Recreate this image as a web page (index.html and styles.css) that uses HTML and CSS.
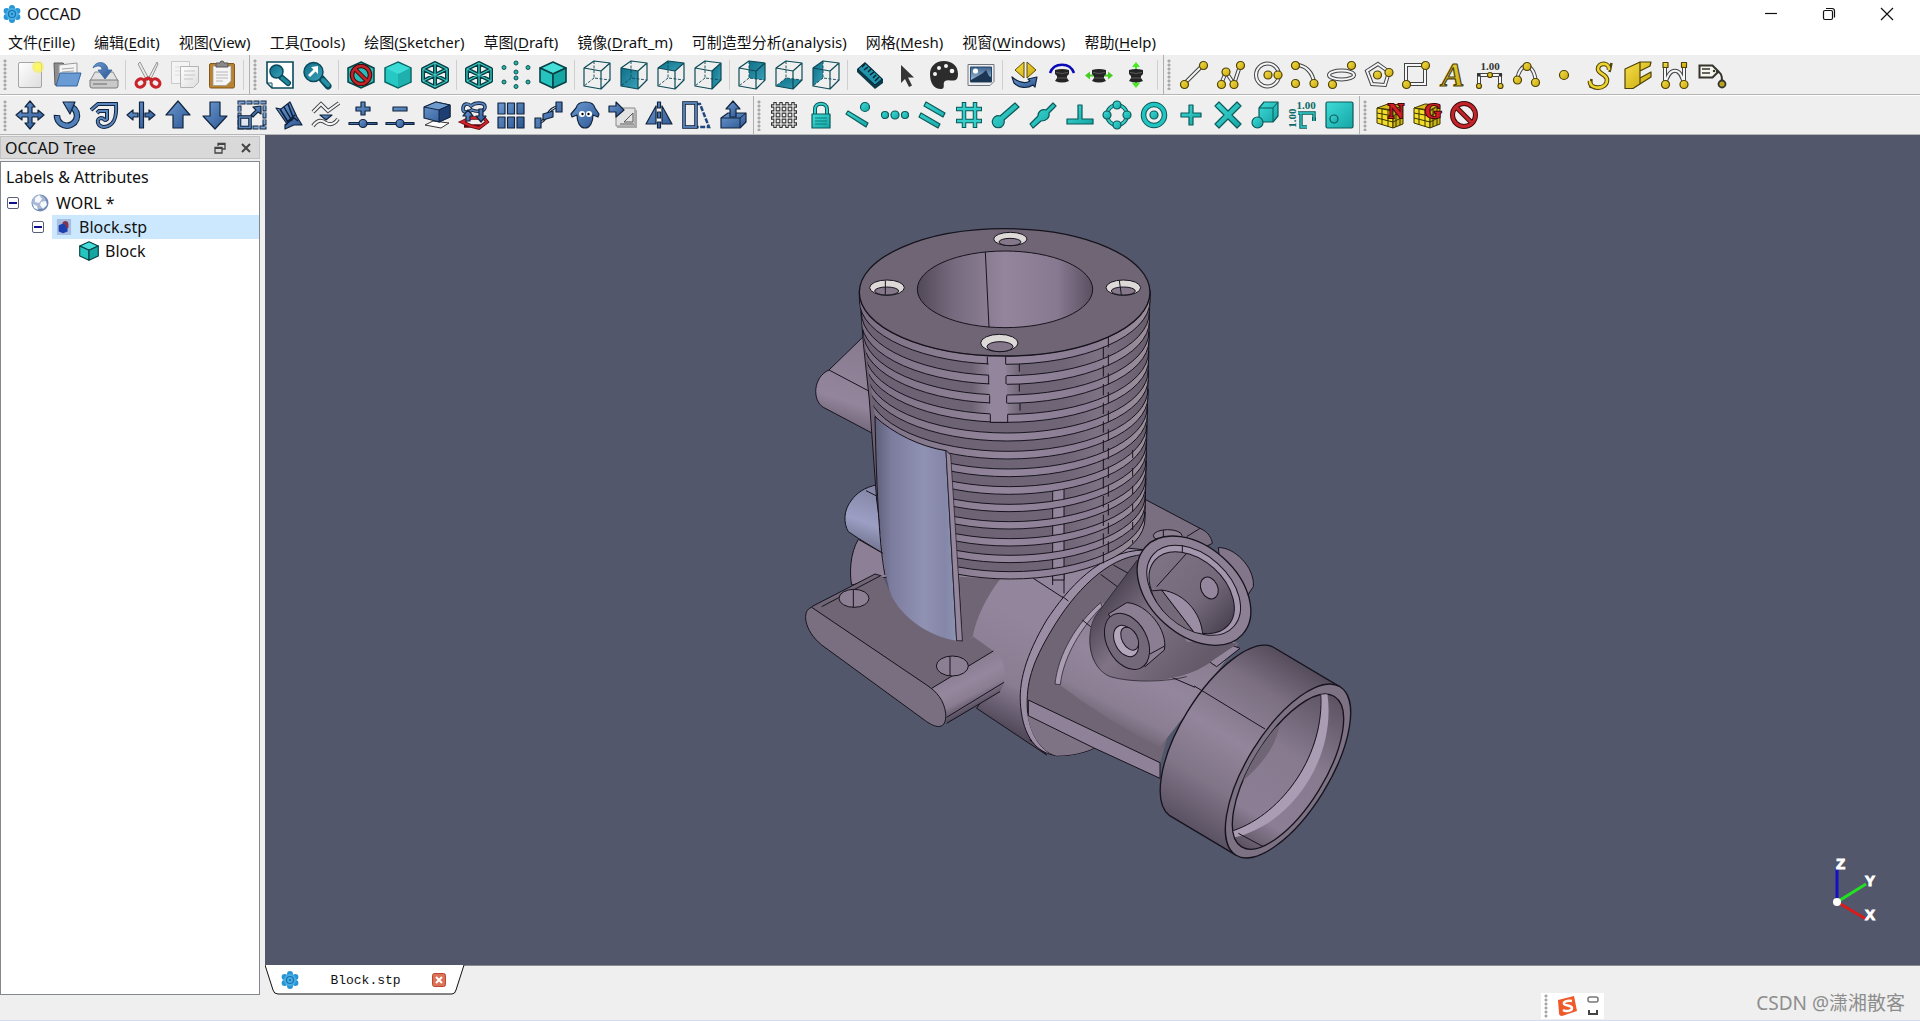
FILE: index.html
```html
<!DOCTYPE html>
<html lang="zh-CN">
<head>
<meta charset="utf-8">
<title>OCCAD</title>
<link rel="stylesheet" href="styles.css">
</head>
<body>
<svg class="defs" aria-hidden="true">
  <defs>
    <linearGradient id="blue" x1="0" y1="0" x2="1" y2="1"><stop offset="0" stop-color="#6c9ad2"/><stop offset="1" stop-color="#2d5692"/></linearGradient>
    <linearGradient id="teal" x1="0" y1="0" x2="1" y2="1"><stop offset="0" stop-color="#3fdcd8"/><stop offset="1" stop-color="#14a5a5"/></linearGradient>
    <linearGradient id="yellow" x1="0" y1="0" x2="1" y2="1"><stop offset="0" stop-color="#f6e04a"/><stop offset="1" stop-color="#c9a60c"/></linearGradient>
    <linearGradient id="face" x1="0" y1="0" x2="1" y2="1"><stop offset="0" stop-color="#0e6f88"/><stop offset="1" stop-color="#3aa0b8"/></linearGradient>
    <linearGradient id="paper" x1="0" y1="0" x2="1" y2="1"><stop offset="0" stop-color="#fff"/><stop offset="1" stop-color="#ddd"/></linearGradient>
    <linearGradient id="sky" x1="0" y1="0" x2="0" y2="1"><stop offset="0" stop-color="#3e648f"/><stop offset="1" stop-color="#a9c4dd"/></linearGradient>
    <g id="cubeWire" fill="none" stroke="#0c4a56" stroke-width="1.2" stroke-linejoin="round">
      <path d="M1 7l17 3v18l-17-3zM1 7L11 0l16 2-9 8M27 2v17l-9 9"/><path d="M11 0v17l16 2M11 17l-10 8" stroke-dasharray="3 1.5" stroke-width=".9"/>
    </g>
    <g id="hexWire" fill="none" stroke-linejoin="round">
      <path d="M14 2l12 6v12l-12 6-12-6V8zM2 8l12 6 12-6M14 14v12M14 2v12M2 20l12-6 12 6" stroke="#053c40" stroke-width="4"/>
      <path d="M14 2l12 6v12l-12 6-12-6V8zM2 8l12 6 12-6M14 14v12M14 2v12M2 20l12-6 12 6" stroke="#3cc9c4" stroke-width="1.300"/>
    </g>
    <g id="solidCube" stroke="#064246" stroke-width="1.6" stroke-linejoin="round">
      <path d="M14 1l13 6-13 6L1 7z" fill="#45ded8"/><path d="M1 7l13 6v14L1 21z" fill="#26c4be"/><path d="M27 7l-13 6v14l13-6z" fill="#17a5a3"/>
    </g>
    <g id="meshCube" stroke="#3b3300" stroke-width="1" stroke-linejoin="round">
      <path d="M1 7l11-4 15 1-10 5z" fill="#d8c11a"/><path d="M1 7l16 3v17L1 22z" fill="#f2dd2a"/><path d="M27 4l-10 6v17l10-4z" fill="#cbb416"/>
      <path d="M6 8v16M12 9v17M1 12l16 3 10-5M1 17l16 4 10-5M20 8v18M24 6v18" fill="none"/>
    </g>
    <g id="spool"><path d="M7 9q7-2 14 0v4l-2 2v2l2 3q-7 3-14 0l2-3v-2l-2-2z" fill="#242424"/><path d="M8 11.500q6 2 12 0M9 17h10" fill="none" stroke="#5a5a5a"/></g>
    <g id="gear">
      <g fill="#2795d6"><circle cx="9" cy="3" r="3"/><circle cx="9" cy="15" r="3"/><circle cx="3.600" cy="6" r="3"/><circle cx="14.400" cy="6" r="3"/><circle cx="3.600" cy="12" r="3"/><circle cx="14.400" cy="12" r="3"/></g>
      <circle cx="9" cy="9" r="6" fill="#49aee4"/><circle cx="9" cy="9" r="3.500" fill="none" stroke="#1474b4" stroke-width="1.2"/><circle cx="9" cy="9" r="1" fill="#0f67a4"/>
    </g>
  </defs>
</svg>

<header class="titlebar">
  <svg class="logo" viewBox="0 0 18 18"><use href="#gear"/></svg>
  <h1>OCCAD</h1>
  <div class="win-buttons">
    <button aria-label="Minimize"><svg viewBox="0 0 14 14"><path d="M1 6.500h12"/></svg></button>
    <button aria-label="Restore"><svg viewBox="0 0 14 14"><rect x="1.500" y="3.500" width="9" height="9" rx="1.500"/><path d="M4 1.500h6a2.500 2.500 0 0 1 2.500 2.500v6.500"/></svg></button>
    <button aria-label="Close"><svg viewBox="0 0 14 14"><path d="M1 1l12 12M13 1L1 13"/></svg></button>
  </div>
</header>

<nav class="menubar">
  <button>文件(<u>F</u>ille)</button><button>编辑(<u>E</u>dit)</button><button>视图(<u>V</u>iew)</button><button>工具(<u>T</u>ools)</button><button>绘图(<u>S</u>ketcher)</button><button>草图(<u>D</u>raft)</button><button>镜像(<u>D</u>raft_m)</button><button>可制造型分析(<u>a</u>nalysis)</button><button>网格(<u>M</u>esh)</button><button>视窗(<u>W</u>indows)</button><button>帮助(<u>H</u>elp)</button>
</nav>

<div class="toolrow">
  <div class="toolbar">
    <i class="handle"></i>
    <button aria-label="New"><svg viewBox="0 0 28 28"><rect x="2.500" y="1.500" width="23" height="25" rx="1.500" fill="url(#paper)" stroke="#a5a5a5"/><circle cx="22" cy="6" r="6" fill="#f6f05a" opacity=".7"/><circle cx="22" cy="6" r="3" fill="#fdf95c"/></svg></button>
    <button aria-label="Open"><svg viewBox="0 0 28 28"><path d="M1 2h9l2 2h11v20H2z" fill="#8d8d8d" stroke="#5d5d5d"/><path d="M6 4l18-2v14H6z" fill="#f4f4f4" stroke="#9a9a9a"/><path d="M9 8l12-1M9 11l12-1" stroke="#aaa"/><path d="M7 12h21l-4 13H3z" fill="#6b9bd4" stroke="#34639e"/></svg></button>
    <button aria-label="Save"><svg viewBox="0 0 28 28"><path d="M5 11h18l5 9H0z" fill="#e2e2e2" stroke="#8a8a8a"/><path d="M0 19h28v6q0 2-2 2H2q-2 0-2-2z" fill="#c9c9c9" stroke="#7b7b7b"/><path d="M3 23h14" stroke="#999" stroke-width="2"/><path d="M3 7C5 0 17-1 18 9h4l-7 9-7-9h4C12 4 7 4 3 7z" fill="url(#blue)" stroke="#3a679f" stroke-width=".8"/></svg></button>
    <i class="sep"></i>
    <button aria-label="Cut"><svg viewBox="0 0 28 28"><path d="M6 1l9 17-2 2L4 3zM23 1l-9 17 2 2 8-17z" fill="#e9e9e9" stroke="#8c8c8c" stroke-width=".9"/><g fill="none" stroke="#c9242b" stroke-width="3.200"><ellipse cx="6.500" cy="22" rx="4.500" ry="4" transform="rotate(-30 6.500 22)"/><ellipse cx="21.500" cy="22" rx="4.500" ry="4" transform="rotate(30 21.500 22)"/><path d="M10 19l4-2 4 2"/></g></svg></button>
    <button aria-label="Copy"><svg viewBox="0 0 28 28"><path d="M0.500 0.500h18v22h-18z" fill="#f4f4f4" stroke="#c9c9c9"/><path d="M4 6h10M4 10h5M4 14h5" stroke="#ddd"/><path d="M9.500 5.500h18v16l-5 5h-13z" fill="url(#paper)" stroke="#b4b4b4"/><path d="M13 10h11M13 14h11M13 18h9" stroke="#c4c4c4"/></svg></button>
    <button aria-label="Paste"><svg viewBox="0 0 28 28"><rect x="1.500" y="2.500" width="25" height="24.500" rx="1.500" fill="#b9822f" stroke="#83571a"/><path d="M5 5h18v15l-5 4.500H5z" fill="#f5f5f5" stroke="#999" stroke-width=".7"/><path d="M8 11h12M8 14h12M8 17h12M8 20h7" stroke="#b5b5b5"/><path d="M8 2h4q0-2 2-2t2 2h4v4H8z" fill="#8a8a86" stroke="#565656"/></svg></button>
    <i class="sep"></i>
  </div>
  <div class="toolbar">
    <i class="handle"></i>
    <button aria-label="Fit all"><svg viewBox="0 0 28 28"><path d="M1 1h26v26H6l-5-5z" fill="#fff" stroke="#0b4a5c" stroke-width="1.600"/><path d="M1 22h5v5" fill="none" stroke="#0b4a5c"/><path d="M15 16l7 6" stroke="#0b4a5c" stroke-width="6" stroke-linecap="round"/><path d="M16 17l6 5" stroke="#1e879c" stroke-width="3.500" stroke-linecap="round"/><circle cx="10.500" cy="10.500" r="6.500" fill="url(#face)" stroke="#0b4a5c" stroke-width="1.500"/></svg></button>
    <button aria-label="Fit selection"><svg viewBox="0 0 28 28"><path d="M19 18l6 7" stroke="#0b4a5c" stroke-width="7" stroke-linecap="round"/><path d="M20 19l5 5" stroke="#2390a4" stroke-width="4" stroke-linecap="round"/><circle cx="10.500" cy="11" r="9.500" fill="url(#face)" stroke="#0b4a5c" stroke-width="1.500"/><path d="M15 5v8l-2.500-2.500L7 16l-2-2 5.500-5.500L8 6z" fill="#fff"/></svg></button>
    <i class="sep"></i>
    <button aria-label="Draw style"><svg viewBox="0 0 28 28"><path d="M14 1l13 6v14l-13 6-13-6V7z" fill="#27bdb8" stroke="#064246" stroke-width="1.500"/><g fill="none"><circle cx="14" cy="14" r="9" stroke="#3d0a0a" stroke-width="4.500"/><path d="M8 8l12 12" stroke="#3d0a0a" stroke-width="4.500"/><circle cx="14" cy="14" r="9" stroke="#c2242a" stroke-width="2.500"/><path d="M8 8l12 12" stroke="#c2242a" stroke-width="2.500"/></g></svg></button>
    <button aria-label="Shaded"><svg viewBox="0 0 28 28"><path d="M14 1l13 6v14l-13 6-13-6V7z" fill="#27c8c4" stroke="#0a6764" stroke-width="1.500"/><path d="M14 13l12-6v14l-12 5z" fill="#1db0ad"/><path d="M14 2l12 5-12 6L2 7z" fill="#3bdcd6"/></svg></button>
    <button aria-label="Wireframe"><svg viewBox="0 0 28 28"><use href="#hexWire"/></svg></button>
    <i class="sep"></i>
    <button aria-label="Hidden line"><svg viewBox="0 0 28 28"><use href="#hexWire"/></svg></button>
    <button aria-label="Points"><svg viewBox="0 0 28 28"><g fill="#2bb0a8" stroke="#0a5552"><circle cx="14" cy="2" r="2"/><circle cx="14" cy="11" r="2"/><circle cx="14" cy="17" r="2"/><circle cx="14" cy="25.500" r="2"/><circle cx="2" cy="6.500" r="2"/><circle cx="26" cy="6.500" r="2"/><circle cx="2" cy="21" r="2"/><circle cx="26" cy="21" r="2"/></g></svg></button>
    <button aria-label="Flat lines"><svg viewBox="0 0 28 28"><use href="#solidCube"/></svg></button>
    <i class="sep"></i>
    <button aria-label="Axonometric"><svg viewBox="0 0 28 28"><use href="#cubeWire"/></svg></button>
    <button aria-label="Front"><svg viewBox="0 0 28 28"><path d="M1 7l17 3v18l-17-3z" fill="url(#face)"/><use href="#cubeWire"/></svg></button>
    <button aria-label="Top"><svg viewBox="0 0 28 28"><path d="M1 7L11 0l16 2-9 8z" fill="url(#face)"/><use href="#cubeWire"/></svg></button>
    <button aria-label="Right"><svg viewBox="0 0 28 28"><path d="M18 10l9-8v17l-9 9z" fill="url(#face)"/><use href="#cubeWire"/></svg></button>
    <i class="sep"></i>
    <button aria-label="Rear"><svg viewBox="0 0 28 28"><path d="M11 0l16 2v17l-16-2z" fill="url(#face)"/><use href="#cubeWire"/></svg></button>
    <button aria-label="Bottom"><svg viewBox="0 0 28 28"><path d="M1 25l10-8 16 2-9 9z" fill="url(#face)"/><use href="#cubeWire"/></svg></button>
    <button aria-label="Left"><svg viewBox="0 0 28 28"><path d="M1 7l10-7v17l-10 8z" fill="url(#face)"/><use href="#cubeWire"/></svg></button>
    <i class="sep"></i>
    <button aria-label="Measure"><svg viewBox="0 0 28 28"><path d="M1 8l8-7 18 17v4l-8 6L1 11z" fill="#0c3948"/><path d="M2 8l7-6 17 16-7 6z" fill="#2193ad" stroke="#062c38"/><path d="M9 3l-3 3M12 6l-4 3M15 8l-3 3M18 11l-4 3M20 14l-3 3M23 16l-4 4" stroke="#03232c" stroke-width="1.500"/></svg></button>
    <button aria-label="Select"><svg viewBox="0 0 28 28"><path d="M8 4v18l4-4 4 8 3-1.500-4-8h6z" fill="#353535"/></svg></button>
    <button aria-label="Appearance"><svg viewBox="0 0 28 28"><path d="M14 0C5 0 0 6 0 13c0 9 4 15 11 15 5 0 1-6 4-8 4-3 13 4 13-7C28 5 22 0 14 0z" fill="#2c2c2c"/><g fill="#f4f4f4"><circle cx="5" cy="13" r="2"/><circle cx="9" cy="7" r="2"/><circle cx="16" cy="5" r="2"/><circle cx="22" cy="10" r="2.300"/></g></svg></button>
    <button aria-label="Image"><svg viewBox="0 0 28 28"><path d="M1 3.500h26v17l-4 4H1z" fill="#eee" stroke="#6e7680"/><path d="M3.500 6h21v15h-21z" fill="url(#sky)" stroke="#264668"/><path d="M4 19l7-4 5-3 3-3 3 6 2 1v5H4z" fill="#1c3552"/><circle cx="8.500" cy="10" r="2.600" fill="#fff"/></svg></button>
    <i class="sep"></i>
    <button aria-label="Rotate view"><svg viewBox="0 0 28 28"><path d="M13 1v16L4 9zM16 1v16l9-8z" fill="url(#yellow)" stroke="#5f4d00"/><path d="M1 16l2 6c5 5 13 6 19 2l2 2 2-10-9 2 2 2c-5 3-12 1-18-4z" class="b"/></svg></button>
    <button aria-label="Tilt"><svg viewBox="0 0 28 28"><path d="M2 12C6 1 22 1 26 12" fill="none" stroke="#0909b8" stroke-width="2.500"/><use href="#spool"/></svg></button>
    <button aria-label="Pan horizontally"><svg viewBox="0 0 28 28"><path d="M0 14.500l5-4v3h4v2H5v3zM28 14.500l-5-4v3h-4v2h4v3z" fill="#46cc22"/><use href="#spool"/></svg></button>
    <button aria-label="Pan vertically"><svg viewBox="0 0 28 28"><path d="M14 1l4 5h-3v5h-2V6h-3zM14 27l4-5h-3v-5h-2v5h-3z" fill="#46ea22"/><use href="#spool"/></svg></button>
    <i class="sep"></i>
  </div>
  <div class="toolbar last">
    <i class="handle"></i>
    <button aria-label="Line"><svg viewBox="0 0 28 28"><path class="o" d="M4 23L23 4"/><path class="i" d="M4 23L23 4"/><g class="y"><circle cx="4.500" cy="23.500" r="4"/><circle cx="23.500" cy="4.500" r="4"/></g></svg></button>
    <button aria-label="Wire"><svg viewBox="0 0 28 28"><path class="o" d="M4 23l5-12 8 12 6-18"/><path class="i" d="M4 23l5-12 8 12 6-18"/><g class="y"><circle cx="4.500" cy="23.500" r="4"/><circle cx="9" cy="11" r="4"/><circle cx="17" cy="23.500" r="4"/><circle cx="23.500" cy="4.500" r="4"/></g></svg></button>
    <button aria-label="Circle"><svg viewBox="0 0 28 28"><circle class="o" cx="13.500" cy="14" r="11.500"/><circle class="i" cx="13.500" cy="14" r="11.500"/><g class="y"><circle cx="14" cy="14" r="4"/><circle cx="24" cy="14" r="4"/></g></svg></button>
    <button aria-label="Arc"><svg viewBox="0 0 28 28"><path class="o" d="M5 4c10 0 17 8 18 18"/><path class="i" d="M5 4c10 0 17 8 18 18"/><g class="y"><circle cx="4.500" cy="4.500" r="4"/><circle cx="4.500" cy="22.500" r="4"/><circle cx="23" cy="22.500" r="4"/></g></svg></button>
    <button aria-label="Ellipse"><svg viewBox="0 0 28 28"><ellipse class="o" cx="13.500" cy="14" rx="12.500" ry="4.500"/><ellipse class="i" cx="13.500" cy="14" rx="12.500" ry="4.500"/><g class="y"><circle cx="4.500" cy="23.500" r="4"/><circle cx="23.500" cy="4.500" r="4"/></g></svg></button>
    <button aria-label="Polygon"><svg viewBox="0 0 28 28"><path class="o" d="M13 3l11 8-4 13-13-1L2 10z"/><path class="i" d="M13 3l11 8-4 13-13-1L2 10z"/><g class="y"><circle cx="12.500" cy="14" r="4"/><circle cx="24" cy="11.500" r="4"/></g></svg></button>
    <button aria-label="Rectangle"><svg viewBox="0 0 28 28"><path class="o" d="M4 4h19v19H4z"/><path class="i" d="M4 4h19v19H4z"/><g class="y"><circle cx="4.500" cy="23.500" r="4"/><circle cx="23.500" cy="4.500" r="4"/></g></svg></button>
    <button aria-label="Text"><svg viewBox="0 0 28 28"><text class="glyph y" x="14" y="25" font-size="34">A</text></svg></button>
    <button aria-label="Dimension"><svg viewBox="0 0 28 28"><path class="o" d="M3 25V14h21v11"/><path class="i" d="M3 25V14h21v11"/><text class="dim" x="14" y="9">1.00</text><g class="y"><circle cx="3" cy="25" r="2.500"/><circle cx="24.500" cy="25" r="2.500"/><circle cx="14" cy="14" r="2.500"/></g><circle cx="3" cy="14" r="1.800" fill="#333"/><circle cx="24.500" cy="14" r="1.800" fill="#333"/></svg></button>
    <button aria-label="B-spline"><svg viewBox="0 0 28 28"><path class="o" d="M4 19C7 0 21 0 23 22"/><path class="i" d="M4 19C7 0 21 0 23 22"/><g class="y"><circle cx="4.500" cy="19" r="4"/><circle cx="14" cy="5.500" r="4"/><circle cx="22.500" cy="21.500" r="4"/></g></svg></button>
    <button aria-label="Point"><svg viewBox="0 0 28 28"><circle class="y" cx="14" cy="14" r="4.500"/></svg></button>
    <button aria-label="Shape string"><svg viewBox="0 0 28 28"><path d="M3 20c-1 9 17 9 17-1 0-6-9-6-9-11 0-7 12-7 11 1" fill="none" stroke="#4e4208" stroke-width="4.600"/><path d="M3.500 27l1-9M22.500 11l2-9" stroke="#4e4208" stroke-width="2.500"/><path d="M3 20c-1 9 17 9 17-1 0-6-9-6-9-11 0-7 12-7 11 1" fill="none" stroke="#ecd32f" stroke-width="2.600"/></svg></button>
    <button aria-label="Facebinder"><svg viewBox="0 0 28 28"><g class="y"><path d="M1 8L16 1v22L9 27.500H1zM16 1h11l-1 4-10 5zM16 17l11-6v5l-11 7z"/></g></svg></button>
    <button aria-label="Bezier"><svg viewBox="0 0 28 28"><path class="o" d="M4 4v20C8 5 20 5 23 24V4"/><path class="i" d="M4 4v20C8 5 20 5 23 24V4"/><g class="y"><circle cx="4.500" cy="23.500" r="4"/><circle cx="23" cy="23.500" r="4"/><path d="M2 1.500h5v5H2zM20.500 1.500h5v5h-5z"/></g></svg></button>
    <button aria-label="Label"><svg viewBox="0 0 28 28"><path d="M1.500 4.500h13l6 6-6 6h-13zM18 10c5 1 6 4 6 10" fill="#f6f6ee" stroke="#34342c" stroke-width="2"/><path d="M4 8h8M4 12h8" stroke="#34342c" stroke-width="1.500"/><circle cx="24" cy="23" r="3.500" fill="#b7a521" stroke="#34342c" stroke-width="1.800"/><circle cx="16" cy="10" r="1.200" fill="#34342c"/></svg></button>
  </div>
</div>

<div class="toolrow">
  <div class="toolbar">
    <i class="handle"></i>
    <button aria-label="Move"><svg viewBox="0 0 28 28"><path class="b" d="M14 0l5 6h-3v6h6V9l6 5-6 5v-3h-6v6h3l-5 6-5-6h3v-6H6v3l-6-5 6-5v3h6V6H9z"/></svg></button>
    <button aria-label="Rotate"><svg viewBox="0 0 28 28"><path d="M4 14a10 10 0 1 0 15-8" fill="none" stroke="#12253f" stroke-width="6.500"/><path d="M4 15a10 10 0 1 0 15-9" fill="none" stroke="#5280ba" stroke-width="4.300"/><path class="b" d="M10 1h12l-5 12z"/></svg></button>
    <button aria-label="Offset"><svg viewBox="0 0 28 28"><g fill="none"><path d="M1 9l7-6h18c1 14-2 22-12 23-6 0-9-8-3-9 4 0 3 4 6 1V10h-8l-2 2" stroke="#12253f" stroke-width="4"/><path d="M1 9l7-6h18c1 14-2 22-12 23-6 0-9-8-3-9 4 0 3 4 6 1V10h-8l-2 2" stroke="#5b86bd" stroke-width="2"/></g></svg></button>
    <button aria-label="Trim"><svg viewBox="0 0 28 28"><path class="b" d="M12.500 1h4v26h-4zM0 14l6-5v3h5v4H6v3zM28 14l-6-5v3h-4v4h4v3z"/></svg></button>
    <button aria-label="Upgrade"><svg viewBox="0 0 28 28"><path class="b" d="M14 0l12 14h-7v13H9V14H2z"/></svg></button>
    <button aria-label="Downgrade"><svg viewBox="0 0 28 28"><path class="b" d="M14 28L2 15h7V1h10v14h7z"/></svg></button>
    <button aria-label="Scale"><svg viewBox="0 0 28 28"><rect x="1.500" y="1.500" width="25" height="25" fill="none" stroke="#12253f" stroke-width="4" stroke-dasharray="6 1"/><rect x="1.500" y="1.500" width="25" height="25" fill="none" stroke="#7ba3d6" stroke-width="2" stroke-dasharray="5 2"/><rect x="1.500" y="16" width="10.500" height="10.500" fill="#dfe6ef" stroke="#12253f" stroke-width="3.600"/><rect x="1.500" y="16" width="10.500" height="10.500" fill="none" stroke="#5b86bd" stroke-width="1.500"/><path class="b" d="M23 5v8l-3-2-5 5-2-2 5-5-3-3z"/></svg></button>
    <button aria-label="Edit"><svg viewBox="0 0 28 28"><path class="b" d="M1 7l5 1L15 1l7 15 5 8-8 0-9 4 0-4 2-1z" stroke-width="2"/><path d="M5 8l8 13M9 6l8 14M13 3l5 13M10 24l9-7 4 3M12 21l8-7" stroke="#0c1f3a" stroke-width="1.500" fill="none"/></svg></button>
    <button aria-label="Wire to B-spline"><svg viewBox="0 0 28 28"><path class="o" d="M1 11l8-8 7 7 11-8M1 25c5-7 9-6 13-3 4 2 8 2 12-4"/><path class="i" d="M1 11l8-8 7 7 11-8M1 25c5-7 9-6 13-3 4 2 8 2 12-4"/><path class="b" d="M8 14h12l-6 5z"/></svg></button>
    <button aria-label="Add point"><svg viewBox="0 0 28 28"><path class="b" d="M12 1h4v5h5v4h-5v4h-4v-4H7V6h5zM0 21.500h28v2H0z"/><circle class="b" cx="14" cy="22.500" r="4"/></svg></button>
    <button aria-label="Remove point"><svg viewBox="0 0 28 28"><path class="b" d="M7 6h14v4H7zM0 21.500h28v2H0z"/><circle class="b" cx="14" cy="22.500" r="4"/></svg></button>
    <button aria-label="2D view"><svg viewBox="0 0 28 28"><path d="M2 24l8-4 16 2-8 5z" fill="#fff" stroke="#333"/><path class="b" d="M1 6l12-5 14 3v12l-11 5-15-4z"/><path d="M1 6l15 3 11-5-14-3z" fill="#6f9ace" stroke="#12253f"/><path d="M16 9l11-5v12l-11 5z" fill="#1d3f74" stroke="#12253f"/></svg></button>
    <button aria-label="Draft to sketch"><svg viewBox="0 0 28 28"><g fill="none"><path d="M2 21l8-4h14l3 4-8 6-8-2zM4 25h18" stroke="#5c0a0e" stroke-width="3.600"/><path d="M2 21l8-4h14l3 4-8 6-8-2z" stroke="#d3222a" stroke-width="2"/><path d="M3 8c0-6 5-6 8-3 4-4 14-4 14 1s-9 5-13 3c-4 3-9 3-9-1z" stroke="#12253f" stroke-width="3.600"/><path d="M3 8c0-6 5-6 8-3 4-4 14-4 14 1s-9 5-13 3c-4 3-9 3-9-1z" stroke="#5b86bd" stroke-width="1.800"/></g><path class="b" d="M6 20v-5H3l5-6 5 6h-3v5zM19 8h4v7h3l-5 6-5-6h3z"/></svg></button>
    <button aria-label="Array"><svg viewBox="0 0 28 28"><path class="b" d="M1 2h7v11H1zM10.500 2h7v11h-7zM20 2h7v11h-7zM1 16h7v11H1zM10.500 16h7v11h-7zM20 16h7v11h-7z"/></svg></button>
    <button aria-label="Path array"><svg viewBox="0 0 28 28"><path d="M3 22C14 22 12 6 25 6" fill="none" stroke="#12253f" stroke-width="3"/><path d="M3 22C14 22 12 6 25 6" fill="none" stroke="#eee"/><path class="b" d="M1 17h6v10H1zM9 13l10-3v6l-10 3zM22 1h6v10h-6z"/></svg></button>
    <button aria-label="Clone"><svg viewBox="0 0 28 28"><path class="b" d="M5 7c2-8 17-8 19 0l4 6-1 3-5-2c0 7-3 13-8 13S6 21 6 14l-5 2-1-3z"/><circle cx="11" cy="13" r="3" fill="#fff"/><circle cx="18" cy="13" r="3" fill="#fff"/><circle cx="11.500" cy="13" r="1.200"/><circle cx="17.500" cy="13" r="1.200"/></svg></button>
    <button aria-label="Drawing"><svg viewBox="0 0 28 28"><path d="M8 7h19v18H8z" fill="#e3e3e3" stroke="#888"/><path d="M9 26h19V9" fill="none" stroke="#aaa" stroke-width="2"/><path d="M16 21l9-9v9zM12 23h14" fill="none" stroke="#555"/><path class="b" d="M1 5h7V1l8 8-8 7v-5H1z"/></svg></button>
    <button aria-label="Mirror"><svg viewBox="0 0 28 28"><path class="b" d="M11 5v18H1zM17 5v18h10zM12.500 1h3v6h-3zM12.500 11h3v6h-3zM12.500 21h3v6h-3z"/></svg></button>
    <button aria-label="Stretch"><svg viewBox="0 0 28 28"><path d="M14 3h4l9 23H14" fill="none" stroke="#20477e" stroke-width="2.500" stroke-dasharray="5 1.500"/><rect x="2" y="2" width="12" height="24" fill="#eee" stroke="#12253f" stroke-width="3.600"/><rect x="2" y="2" width="12" height="24" fill="none" stroke="#5b86bd" stroke-width="1.800"/></svg></button>
    <button aria-label="Extrude"><svg viewBox="0 0 28 28"><path class="b" d="M2 17l7-5h18v9l-6 6H2z"/><path d="M2 17h19v10M21 17l6-5" fill="none" stroke="#12253f"/><path class="b" d="M14 0l7 8h-4v8h-6V8H7z"/></svg></button>
  </div>
  <div class="toolbar">
    <i class="handle"></i>
    <button aria-label="Grid"><svg viewBox="0 0 28 28"><path d="M5 1v26M11 1v26M17 1v26M23 1v26M1 5h26M1 11h26M1 17h26M1 23h26" stroke="#333" stroke-width="3.400"/><path d="M5 2v24M11 2v24M17 2v24M23 2v24M2 5h24M2 11h24M2 17h24M2 23h24" stroke="#fff" stroke-width="1.200"/></svg></button>
    <button aria-label="Snap lock"><svg viewBox="0 0 28 28"><path d="M8 14V8c0-7 12-7 12 0v6" fill="none" stroke="#0b5a58" stroke-width="4"/><path d="M8 14V8c0-7 12-7 12 0v6" fill="none" stroke="#35cfcb" stroke-width="2"/><path class="t" d="M5 13h18v14H5z"/><path d="M8 17h12M8 20h12M8 23h12" stroke="#0b7a78"/></svg></button>
    <button aria-label="Snap end"><svg viewBox="0 0 28 28"><circle class="t" cx="21" cy="6" r="4.500"/><path class="t" d="M4 10l20 12-2 4L2 13z"/></svg></button>
    <button aria-label="Snap extension"><svg viewBox="0 0 28 28"><g class="t"><circle cx="4" cy="14" r="3.500"/><circle cx="14" cy="14" r="4"/><circle cx="24" cy="14" r="3.500"/></g></svg></button>
    <button aria-label="Snap parallel"><svg viewBox="0 0 28 28"><path class="t" d="M8 1l19 11-2 4L6 5zM3 12l19 11-2 4L1 16z"/></svg></button>
    <button aria-label="Snap grid"><svg viewBox="0 0 28 28"><path d="M9 1v26M20 1v26M1 8h26M1 20h26" stroke="#0b5a58" stroke-width="4.500"/><path d="M9 2v24M20 2v24M2 8h24M2 20h24" stroke="#35cfcb" stroke-width="2.500"/></svg></button>
    <button aria-label="Snap endpoint"><svg viewBox="0 0 28 28"><path class="t" d="M23 2l4 4-15 13a6 6 0 1 1-4-4z"/></svg></button>
    <button aria-label="Snap midpoint"><svg viewBox="0 0 28 28"><path class="t" d="M1 23l8-8a6 6 0 0 1 8-6l7-7 3 3-7 7c1 5-3 8-8 8l-8 7z"/></svg></button>
    <button aria-label="Snap perpendicular"><svg viewBox="0 0 28 28"><path class="t" d="M12 4h4v14h11v5H1v-5h11z"/></svg></button>
    <button aria-label="Snap angle"><svg viewBox="0 0 28 28"><circle cx="14" cy="14" r="10" fill="none" stroke="#0b5a58" stroke-width="4"/><circle cx="14" cy="14" r="10" fill="none" stroke="#35cfcb" stroke-width="2"/><g class="t"><circle cx="14" cy="4" r="4"/><circle cx="14" cy="24" r="4"/><circle cx="4" cy="14" r="4"/><circle cx="24" cy="14" r="4"/></g></svg></button>
    <button aria-label="Snap center"><svg viewBox="0 0 28 28"><circle cx="14" cy="14" r="10.500" fill="none" stroke="#0b5a58" stroke-width="5.500"/><circle cx="14" cy="14" r="10.500" fill="none" stroke="#22c4c2" stroke-width="3.500"/><circle class="t" cx="14" cy="14" r="4"/></svg></button>
    <button aria-label="Snap ortho"><svg viewBox="0 0 28 28"><path class="t" d="M12 4h4v8h8v4h-8v8h-4v-8H4v-4h8z"/></svg></button>
    <button aria-label="Snap intersection"><svg viewBox="0 0 28 28"><path class="t" d="M5 1l9 9 9-9 4 4-9 9 9 9-4 4-9-9-9 9-4-4 9-9-9-9z"/></svg></button>
    <button aria-label="Snap special"><svg viewBox="0 0 28 28"><path class="t" d="M8 7l5-6h14v14l-5 6H8z"/><path d="M8 7h14v14M22 7l5-6" fill="none" stroke="#0b5a58"/><circle class="t" cx="6.500" cy="21.500" r="5.500"/></svg></button>
    <button aria-label="Snap dimensions"><svg viewBox="0 0 28 28"><text class="dim t" x="18" y="8">1.00</text><text class="dim t" transform="rotate(-90 8 17)" x="8" y="17">1.00</text><path d="M10 12h16v8M13 12v14h6M24 18h4" fill="none" stroke="#0b5a58" stroke-width="3.400"/><path d="M10 12h16v8M13 12v14h6" fill="none" stroke="#35cfcb" stroke-width="1.300"/></svg></button>
    <button aria-label="Snap working plane"><svg viewBox="0 0 28 28"><rect class="t" x="1" y="1" width="27" height="26" rx="1.500"/><circle class="t" cx="9" cy="18" r="4"/></svg></button>
  </div>
  <div class="toolbar last">
    <i class="handle"></i>
    <button aria-label="Netgen mesh"><svg viewBox="0 0 28 28"><use href="#meshCube"/><text class="mesh" x="20" y="17">N</text></svg></button>
    <button aria-label="Gmsh mesh"><svg viewBox="0 0 28 28"><use href="#meshCube"/><text class="mesh" x="20" y="17">G</text></svg></button>
    <button aria-label="Clear mesh"><svg viewBox="0 0 28 28"><g fill="none"><circle cx="14" cy="14" r="11.500" stroke="#3d0a0a" stroke-width="5"/><path d="M6 6l16 16" stroke="#3d0a0a" stroke-width="5"/><circle cx="14" cy="14" r="11.500" stroke="#c2242a" stroke-width="3"/><path d="M6 6l16 16" stroke="#c2242a" stroke-width="3"/></g></svg></button>
  </div>
</div>

<main class="workspace">
  <aside class="dock">
    <div class="dock-title"><h2>OCCAD Tree</h2>
      <button aria-label="Float"><svg viewBox="0 0 12 12"><path d="M4 4V1.500h7V7H8M1 5.500h7V11H1z" fill="none" stroke="#444" stroke-width="1.300"/><path d="M4 2h7M1 6h7" stroke="#444" stroke-width="2"/></svg></button>
      <button aria-label="Close panel"><svg viewBox="0 0 12 12"><path d="M2 2l8 8M10 2l-8 8" stroke="#444" stroke-width="2"/></svg></button>
    </div>
    <div class="tree">
      <div class="tree-head">Labels &amp; Attributes</div>
      <ul>
        <li class="l1"><button class="expander" aria-label="Collapse WORL"></button><svg viewBox="0 0 18 18"><circle cx="9" cy="9" r="8.500" fill="#7189b4"/><circle cx="8" cy="8" r="7" fill="#a9b9d6"/><path d="M4 4l4-3 3 4-3 4-4-1zM10 8l5-1 1 4-4 4-3-4zM2 10l4 2 1 4-4-2z" fill="#f7f9fd"/></svg><span>WORL *</span></li>
        <li class="l2"><button class="expander" aria-label="Collapse Block.stp"></button><div class="selected"><svg viewBox="0 0 18 18"><path d="M1 0h16v18H1z" fill="#a9bde0"/><path d="M3 7l5-2 5 2v7l-5 2-5-2z" fill="#1b3fae"/><path d="M7 5c1-4 7-4 7 1v4h-3V7z" fill="#7e3552"/></svg><span>Block.stp</span></div></li>
        <li class="l3"><svg viewBox="0 0 28 28"><use href="#solidCube"/></svg><span>Block</span></li>
      </ul>
    </div>
  </aside>

  <section class="document">
    <div class="viewport">
      <svg class="model" viewBox="-1545 -195 4965 2490" role="img" aria-label="Engine block">
        <defs>
          <linearGradient id="bore"><stop offset="0" stop-color="#514858"/><stop offset=".2" stop-color="#756a7d"/><stop offset=".5" stop-color="#94859c"/><stop offset=".8" stop-color="#877990"/><stop offset="1" stop-color="#5a5061"/></linearGradient>
          <linearGradient id="fin" gradientUnits="userSpaceOnUse" x1="240" y1="0" x2="1110" y2="0"><stop offset="0" stop-color="#7b7083"/><stop offset=".5" stop-color="#93859b"/><stop offset=".8" stop-color="#897b91"/><stop offset="1" stop-color="#9b909a"/></linearGradient>
          <linearGradient id="gap" gradientUnits="userSpaceOnUse" x1="240" y1="0" x2="1110" y2="0"><stop offset="0" stop-color="#6b6172"/><stop offset=".7" stop-color="#6f6576"/><stop offset=".82" stop-color="#7d7184"/><stop offset="1" stop-color="#675d6c"/></linearGradient>
          <linearGradient id="slot"><stop offset="0" stop-color="#6f6575"/><stop offset=".4" stop-color="#93859b"/><stop offset=".65" stop-color="#93859b"/><stop offset="1" stop-color="#6f6575"/></linearGradient>
          <linearGradient id="panel"><stop offset="0" stop-color="#5e5f78"/><stop offset=".2" stop-color="#7c7c9e"/><stop offset=".6" stop-color="#9092b4"/><stop offset=".85" stop-color="#8586a8"/><stop offset="1" stop-color="#8c93b0"/></linearGradient>
          <linearGradient id="lug" x1=".3" y1="0" x2=".1" y2="1"><stop offset="0" stop-color="#887b90"/><stop offset=".6" stop-color="#93859b"/><stop offset="1" stop-color="#5c5263"/></linearGradient>
          <linearGradient id="lugFront" gradientUnits="userSpaceOnUse" x1="540" y1="650" x2="600" y2="768"><stop offset="0" stop-color="#8a7d92"/><stop offset=".4" stop-color="#95879d"/><stop offset=".7" stop-color="#8a7c91"/><stop offset="1" stop-color="#51495a"/></linearGradient>
          <linearGradient id="bluelug" x1=".4" y1="0" x2=".2" y2="1"><stop offset="0" stop-color="#8486a6"/><stop offset=".5" stop-color="#9c9fc4"/><stop offset="1" stop-color="#626279"/></linearGradient>
          <linearGradient id="case" gradientUnits="userSpaceOnUse" x1="800" y1="540" x2="665" y2="830"><stop offset="0" stop-color="#93859b"/><stop offset=".6" stop-color="#8a7d92"/><stop offset="1" stop-color="#51495a"/></linearGradient>
          <linearGradient id="shaft" gradientUnits="userSpaceOnUse" x1="460" y1="420" x2="310" y2="715"><stop offset="0" stop-color="#887b8f"/><stop offset=".5" stop-color="#94869c"/><stop offset=".85" stop-color="#8b7e93"/><stop offset="1" stop-color="#746979"/></linearGradient>
          <linearGradient id="carb" gradientUnits="userSpaceOnUse" x1="290" y1="370" x2="560" y2="600"><stop offset="0" stop-color="#4a4251"/><stop offset=".4" stop-color="#807386"/><stop offset="1" stop-color="#645a69"/></linearGradient>
          <linearGradient id="mouth"><stop offset="0" stop-color="#7e7285"/><stop offset=".6" stop-color="#74697b"/><stop offset="1" stop-color="#4c4453"/></linearGradient>
          <linearGradient id="collar" gradientUnits="userSpaceOnUse" x1="910" y1="560" x2="600" y2="1070"><stop offset="0" stop-color="#564d5d"/><stop offset=".2" stop-color="#7b6f81"/><stop offset=".5" stop-color="#93859b"/><stop offset=".75" stop-color="#807487"/><stop offset="1" stop-color="#585061"/></linearGradient>
          <linearGradient id="collarIn" gradientUnits="userSpaceOnUse" x1="1000" y1="650" x2="720" y2="1100"><stop offset="0" stop-color="#5d5363"/><stop offset=".4" stop-color="#877a8f"/><stop offset=".8" stop-color="#8c7e94"/><stop offset="1" stop-color="#5a505f"/></linearGradient>
          <clipPath id="finWindow"><path d="M230 260H1120V1160H532L505 752 380 722 285 652z"/></clipPath>
          <clipPath id="collarHole"><ellipse cx="864" cy="875" rx="265" ry="108" transform="rotate(-58.300 864 875)"/></clipPath>
          <clipPath id="carbHole"><ellipse cx="577" cy="338" rx="148" ry="100" transform="rotate(42 577 338)"/></clipPath>
        </defs>

        <g class="edge">
          <path d="M250 410L147 510C100 530 95 600 130 622L287 705V400z" fill="url(#lug)"/>
          <path d="M147 510L270 575" fill="none"/>
          <g transform="translate(0 750)">
            <path d="M295 103C250 113 230 130 215 150 190 180 190 220 205 245L235 265 312 312z" fill="url(#bluelug)"/>
            <path d="M258 122L298 142" fill="none"/>
            <path d="M235 268C210 310 208 370 215 405L325 380 312 312z" fill="#8d7f95"/>
          </g>
          <g transform="translate(660 840)">
            <path d="M400 40L435 58 600 145C625 155 635 175 637 190L500 260 380 220z" fill="#7a6f80"/>
            <ellipse cx="503" cy="167" rx="43" ry="18" fill="#8c7f92"/><path d="M490 150V185M600 145L560 170" fill="none"/>
            <path d="M655 203C700 200 765 260 760 320L740 350 660 250z" fill="#83768a"/>
          </g>

          <g transform="translate(0 750)">
            <path d="M535 370C700 395 900 360 1000 290L1100 300 860 450 750 870 800 915 590 775 640 700 548 575z" fill="url(#case)"/>
            <path d="M538 380L660 388C620 440 590 500 578 560L548 575z" fill="#6f6575" stroke="none"/>
            <path d="M818 300V405M852 300V430M760 385L860 450" fill="none"/>
            <path d="M1095 300C960 300 860 420 800 510 735 620 715 700 722 770 730 860 770 910 830 917 880 917 920 905 940 895L1200 760V340z" fill="#9b8da3"/>
            <path d="M1090 314C980 320 880 430 815 540 755 640 738 700 742 780 750 860 790 910 830 917 880 917 920 905 940 895L1200 760V340z" fill="#6f6575"/>
            <path d="M742 790C750 860 790 910 830 917 880 917 920 905 940 895z" fill="#7e7384" stroke="none"/>
            <path d="M848 440L865 453M962 373L1012 410" fill="none"/>
            <path d="M1000 345L1045 370" fill="none"/>
          </g>
          <g transform="translate(660 840)">
            <path d="M90 664L180 590 540 640 480 850z" fill="#6f6575" stroke="none"/>
            <path d="M85 660L480 848V895L280 803 85 707z" fill="#8f8198"/>
            <path d="M165 612C175 520 230 430 302 368L420 400 715 490 560 700 480 800Q330 730 180 615z" fill="url(#shaft)" stroke="none"/>
            <path d="M165 612C175 520 230 430 302 368L306 380C245 440 190 530 181 614z" fill="#aa9cb2" stroke-width="2"/>
            <path d="M247 420L272 440M515 592L585 622" fill="none"/>
            <path d="M620 540L685 492 720 505 650 560z" fill="#94869c"/>
            <path d="M412 240L285 410C255 480 265 560 330 590 420 615 560 605 640 540L715 490 560 485z" fill="url(#carb)" stroke="none"/>
            <path d="M412 240L285 410C258 460 262 560 330 590 400 610 500 605 560 590" fill="none" stroke-width="2"/>
            <path d="M325 402L380 368C440 370 505 450 493 510L435 560z" fill="#8b7e93"/>
            <path d="M450 522L494 498" fill="none"/>
            <ellipse cx="381" cy="484" rx="60" ry="90" transform="rotate(-28 381 484)" fill="#73687a"/>
            <ellipse cx="378" cy="483" rx="33" ry="50" transform="rotate(-28 378 483)" fill="#b3a6bb"/>
            <ellipse cx="389" cy="476" rx="23" ry="37" transform="rotate(-28 389 476)" fill="#82758a"/>
            <ellipse cx="582" cy="332" rx="196" ry="132" transform="rotate(42 582 332)" fill="#8d8094" stroke-width="4"/>
            <ellipse cx="581" cy="331" rx="162" ry="108" transform="rotate(42 581 331)" fill="#a496ac"/>
            <ellipse cx="575" cy="338" rx="147" ry="99" transform="rotate(42 575 338)" fill="url(#mouth)"/>
            <g clip-path="url(#carbHole)">
              <path d="M440 334L485 330 600 480 470 440z" fill="#746979"/>
              <path d="M485 330C560 340 612 410 608 480H600z" fill="#9b8da3"/>
              <path d="M470 320L560 220" fill="none"/>
            </g>
            <ellipse cx="628" cy="324" rx="25" ry="34" transform="rotate(-25 628 324)" fill="#94869c"/>
            <path d="M547 195V216" fill="none"/>
            <path d="M819 501A297 123 -58.300 0 0 509 1007L709 1126 1019 620z" fill="url(#collar)" stroke-width="4"/>
            <path d="M583 618L795 747" fill="none"/>
            <ellipse cx="864" cy="873" rx="297" ry="123" transform="rotate(-58.300 864 873)" fill="#7d7283" stroke-width="4"/>
            <path d="M1003.300 649.500A265 108 -58.300 0 0 724.700 1100.500 265 108 -58.300 0 0 1003.300 649.500z" fill="url(#collarIn)" stroke-width="4"/>
            <g clip-path="url(#collarHole)">
              <path d="M720 910C780 860 830 800 838 735L700 820z" fill="#6f6575" stroke="none"/>
              <path d="M960 640C980 820 850 1000 700 1052L705 1072C880 1030 1010 830 982 640z" fill="#aa9cb2" stroke="none"/>
              <path d="M962 640C975 820 850 1000 700 1052" fill="none"/>
              <path d="M715 1060L790 1100" fill="none"/>
            </g>
          </g>

          <g transform="translate(0 750)">
            <path d="M95 470L285 372 312 385C340 470 430 560 545 575L580 560 640 603 455 715z" fill="#6f6575" stroke="none"/>
            <path d="M95 470L285 372 305 378M125 470L300 378" fill="none"/>
            <path d="M455 715L640 603C672 615 680 670 672 700L660 725 500 820C500 780 480 735 455 715z" fill="url(#lugFront)" stroke="none"/>
            <path d="M455 715L640 603M672 697L500 802M500 820L660 725" fill="none"/>
            <path d="M95 472C65 480 70 540 125 585L440 815C480 842 500 830 497 790 492 750 470 725 440 705z" fill="#7a6f80"/>
            <ellipse cx="222" cy="445" rx="45" ry="27" fill="#8c7f93"/><path d="M220 420V471" fill="none"/>
            <ellipse cx="517" cy="648" rx="48" ry="30" fill="#8c7f93"/><path d="M510 620V677" fill="none"/>
          </g>

          <path d="M238 270L250 430 268 600 290 900 320 1120H535C700 1150 860 1130 985 1078L1058 1030C1085 990 1096 980 1096 900L1110 270z" fill="url(#gap)"/>
          <path d="M578 470H722V650H578z" fill="url(#slot)" stroke="none"/>
          <path d="M718 490V515M718 550V575M720 610V632" fill="none"/>
          <path d="M818 860H852V1140H818z" fill="#93859b"/>
          <g class="fins" clip-path="url(#finWindow)">
            <path d="M238 277A436 191 0 0 0 1110 277V302A436 191 0 0 1 238 302z"/>
            <path d="M244 337A432 190 0 0 0 1108 337V363A432 190 0 0 1 244 363z"/>
            <path d="M249 395A429 190 0 0 0 1107 395V420A429 190 0 0 1 249 420z"/>
            <path d="M254 454A426 189 0 0 0 1106 454V478A426 189 0 0 1 254 478z"/>
            <path d="M259 511A423 188 0 0 0 1105 511V535A423 188 0 0 1 259 535z"/>
            <path d="M264 567A420 187 0 0 0 1104 567V590A420 187 0 0 1 264 590z"/>
            <path d="M268 621A417 186 0 0 0 1102 621V644A417 186 0 0 1 268 644z"/>
            <path d="M272 675A414 185 0 0 0 1100 675V698A414 185 0 0 1 272 698z"/>
            <path d="M275 729A412 184 0 0 0 1099 729V751A412 184 0 0 1 275 751z"/>
            <path d="M278 782A410 183 0 0 0 1098 782V804A410 183 0 0 1 278 804z"/>
            <path d="M281 834A408 182 0 0 0 1097 834V856A408 182 0 0 1 281 856z"/>
            <path d="M284 885A406 181 0 0 0 1096 885V907A406 181 0 0 1 284 907z"/>
            <path d="M287 935A404 180 0 0 0 1095 935V957A404 180 0 0 1 287 957z"/>
          </g>
          <path d="M625 468H677L684 666H632z" fill="#93859b" stroke="none"/>
          <path d="M622 470V493M677 470V493M626 527V552M678 528V552M629 586V610M680 586V610M631 643V667H683V643" fill="none"/>
          <path d="M970 440V1090M985 408V1078" fill="none" stroke-dasharray="34 22"/>
          <path d="M1058 750V1030" fill="none" stroke-dasharray="24 30"/>
          <ellipse cx="674" cy="277" rx="436" ry="191" fill="#6f6575" stroke-width="4"/>
          <ellipse cx="675" cy="268" rx="263" ry="115" fill="url(#bore)"/>
          <path d="M616 156L627 382" fill="none"/>
          <g>
            <ellipse cx="691" cy="117" rx="50" ry="20" fill="#dcd9d6"/><ellipse cx="690" cy="126" rx="33" ry="11" fill="#84778a"/>
            <ellipse cx="321" cy="263" rx="52" ry="23" fill="#dcd9d6"/><ellipse cx="320" cy="273" rx="36" ry="12" fill="#84778a"/><path d="M316 242V284"/>
            <ellipse cx="1030" cy="263" rx="52" ry="23" fill="#dcd9d6"/><ellipse cx="1030" cy="273" rx="36" ry="12" fill="#84778a"/><path d="M1018 242L1024 284"/>
            <ellipse cx="658" cy="429" rx="56" ry="26" fill="#dcd9d6"/><ellipse cx="660" cy="440" rx="39" ry="15" fill="#84778a"/>
          </g>

          <path d="M285 650C340 700 420 740 498 752L530 1322C440 1310 350 1240 328 1170 300 1050 290 900 285 650z" fill="url(#panel)" stroke="none"/>
          <path d="M530 1322L498 752C420 740 340 700 285 650 290 900 300 1050 315 1125" fill="none"/>
          <path d="M498 752L512 765 535 1122 547 1322H530z" fill="#94869c" stroke-width="2"/>
        </g>
      </svg>
      <svg class="triad" viewBox="0 0 50 72" aria-hidden="true">
        <path d="M7 49V15" stroke="#1212c4" stroke-width="3"/><path d="M7 49l29-18" stroke="#22e022" stroke-width="3"/><path d="M7 49l29 17" stroke="#d81c1c" stroke-width="3"/><circle cx="7" cy="49" r="4" fill="#fff"/>
        <text x="6" y="16">Z</text><text x="35" y="33">Y</text><text x="35" y="67">X</text>
      </svg>
    </div>
    <div class="tabs">
      <div class="tab">
        <svg class="tab-shape" viewBox="0 0 200 30" aria-hidden="true"><path d="M0 0L8 25q1 4 5 4h174q3 0 4-4L199 0" fill="#fff" stroke="#111"/></svg>
        <svg class="logo" viewBox="0 0 18 18"><use href="#gear"/></svg>
        <button class="tab-label">Block.stp</button>
        <button class="tab-close" aria-label="Close tab"><svg viewBox="0 0 14 14"><rect x=".5" y=".5" width="13" height="13" rx="2" fill="#dc7359" stroke="#b9482f"/><path d="M4 4l6 6M10 4l-6 6" stroke="#fff" stroke-width="2"/></svg></button>
      </div>
    </div>
  </section>
</main>

<div class="ime">
  <i class="handle"></i>
  <svg viewBox="0 0 20 20"><path d="M1 4l16-4 3 15-15 5q-3 0-3-3z" fill="#ee5a2a"/><path d="M15 5C10 4 6 6 7 8s8 1 8 4-6 4-9 2" fill="none" stroke="#fff" stroke-width="2.500"/></svg>
  <svg viewBox="0 0 20 20"><rect x="6" y="1" width="10" height="5" rx="2" fill="none" stroke="#777" stroke-width="1.500"/><path d="M7 14v4h8v-4" fill="none" stroke="#444" stroke-width="2"/></svg>
</div>
<p class="watermark">CSDN @潇湘散客</p>
</body>
</html>
```
FILE: styles.css
```css
* { box-sizing: border-box; }
body {
  margin: 0;
  height: 100vh;
  display: flex;
  flex-direction: column;
  overflow: hidden;
  position: relative;
  background: #efefef;
  border-bottom: 1px solid #d3dcef;
  color: #111;
  font: 16px/24px "Noto Sans", "Noto Sans CJK SC", sans-serif;
}
h1, h2, p, ul { margin: 0; padding: 0; font: inherit; list-style: none; }
button { padding: 0; border: 0; background: none; font: inherit; color: inherit; }
svg { display: block; }
.defs { position: absolute; width: 0; height: 0; }

.titlebar { display: flex; align-items: center; height: 28px; padding-left: 3px; background: #fff; }
.logo { width: 18px; height: 18px; }
.titlebar h1 { margin-left: 6px; flex: 1; }
.win-buttons { display: flex; padding-right: 4px; }
.win-buttons button { width: 58px; height: 28px; display: grid; place-items: center; }
.win-buttons svg { width: 14px; height: 14px; fill: none; stroke: #111; stroke-width: 1.2; }

.menubar { display: flex; gap: 19px; height: 26px; padding: 2px 8px 0; background: #fff; font-size: 15px; line-height: 24px; }
.menubar button { white-space: nowrap; line-height: 24px; }
.menubar u { text-decoration-thickness: 1px; text-underline-offset: 2px; }

.toolrow { display: flex; height: 41px; border-top: 1px solid #fff; border-bottom: 1px solid #b5b5b5; }
.toolrow + .toolrow { height: 40px; }
.toolbar { display: flex; align-items: center; padding-right: 2px; border-right: 1px solid #b0b0b0; }
.toolbar.last { flex: 1; border-right: 0; }
.toolbar button { width: 37px; height: 36px; display: grid; place-items: center; }
.toolbar svg { width: 28px; height: 28px; overflow: visible; }
.handle { width: 11px; height: 31px; background: radial-gradient(circle, #a8a8a8 1px, transparent 2px) 3px 0 / 4px 4px repeat-y; }
.sep { width: 7px; height: 30px; border-left: 1px solid #cfcfcf; margin-left: 3px; margin-right: -3px; }

.b { fill: url(#blue); stroke: #12253f; stroke-width: 1.2; stroke-linejoin: round; }
.t { fill: url(#teal); stroke: #0b5a58; stroke-width: 1.2; stroke-linejoin: round; }
.y { fill: url(#yellow); stroke: #4e4208; stroke-width: 1.2; stroke-linejoin: round; }
.o { fill: none; stroke: #444; stroke-width: 4; }
.i { fill: none; stroke: #f4f6f8; stroke-width: 2; }
.glyph { font-family: "Liberation Serif", serif; font-weight: bold; font-style: italic; text-anchor: middle; }
.dim { font: bold 11px "Liberation Serif", serif; text-anchor: middle; fill: #333; }
.dim.t { fill: #0b6a68; stroke: none; }
.mesh { font: bold 22px "Liberation Serif", serif; text-anchor: middle; fill: #cf1f27; stroke: #4a0508; stroke-width: 2px; paint-order: stroke; }

.workspace { flex: 1; min-height: 0; display: flex; gap: 5px; }
.dock { width: 260px; padding: 1px 0 25px; display: flex; flex-direction: column; gap: 2px; }
.dock-title { display: flex; align-items: center; height: 23px; padding: 0 7px 0 4px; gap: 14px; background: #d9d9d9; border: 1px solid #c2c2c2; }
.dock-title h2 { flex: 1; }
.dock-title button { width: 12px; height: 12px; }
.tree { flex: 1; background: #fff; border: 1px solid #828790; }
.tree-head { height: 29px; padding: 3px 5px; }
.tree li { display: flex; align-items: center; height: 24px; }
.tree li svg { width: 18px; height: 18px; margin-right: 7px; flex: none; }
.tree .l1 { padding-left: 6px; }
.tree .l1 svg { margin-left: 12px; }
.tree .l2 { padding-left: 31px; }
.tree .l2 svg { width: 16px; }
.tree .l3 { padding-left: 78px; }
.tree .l3 svg { width: 20px; height: 20px; margin-right: 6px; }
.selected { flex: 1; display: flex; align-items: center; height: 24px; margin-left: 8px; padding-left: 4px; background: #cce8ff; }
.expander { width: 12px; height: 12px; border: 1px solid #5a5f78; border-radius: 2px; background: linear-gradient(#10108c, #10108c) center / 8px 2px no-repeat #fff; }

.document { flex: 1; min-width: 0; display: flex; flex-direction: column; }
.viewport { flex: 1; min-height: 0; position: relative; background: #52576c; }
.model { width: 100%; height: 100%; }
.edge { stroke: #17131d; stroke-width: 3; stroke-linejoin: round; }
.fins path { fill: url(#fin); stroke-width: 3; }
.triad { position: absolute; right: 40px; bottom: 40px; width: 50px; height: 72px; fill: none; }
.triad text { font: bold 15px "Liberation Sans", sans-serif; fill: #fff; stroke: #fff; stroke-width: 1; }
.tabs { height: 55px; border-top: 1px solid #8c8c8c; }
.tab { position: relative; width: 200px; height: 30px; margin-top: -1px; padding: 0 19px 0 16px; display: flex; align-items: center; }
.tab > * { position: relative; }
.tab > .tab-shape { position: absolute; inset: 0; width: 200px; height: 30px; }
.tab-label { flex: 1; font: 13px/20px "Liberation Mono", monospace; padding-top: 2px; }
.tab-close, .tab-close svg { width: 14px; height: 14px; }

.ime { position: absolute; right: 316px; bottom: 1px; width: 63px; height: 26px; display: flex; align-items: center; gap: 5px; background: #fff; }
.ime .handle { height: 24px; }
.ime svg { width: 20px; height: 20px; }
.watermark { position: absolute; right: 15px; bottom: 5px; font-size: 19px; color: #8d8d8d; }
```
